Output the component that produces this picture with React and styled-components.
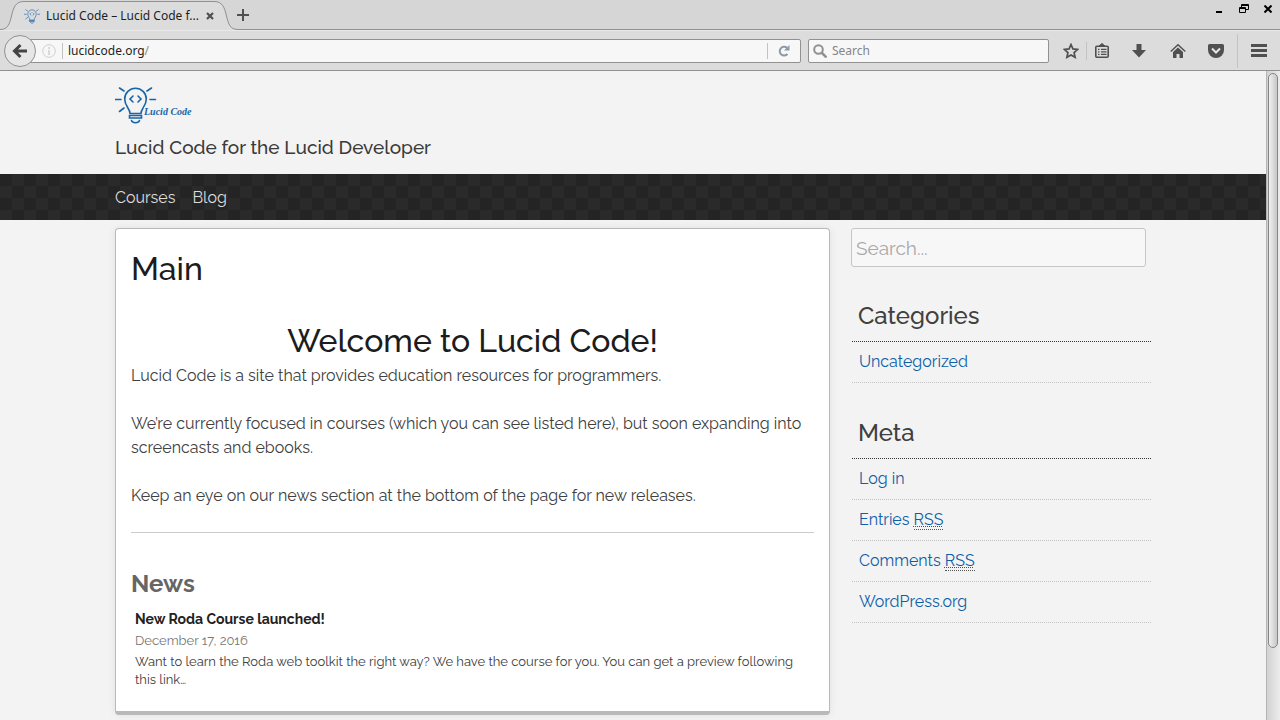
import React from "react";
import styled, { createGlobalStyle } from "styled-components";

const Global = createGlobalStyle`
  * { box-sizing: border-box; }
  body { margin: 0; background: #f3f3f3; overflow: hidden; }
  h1, h2, h3, h4, p, ul { margin: 0; padding: 0; }
  h1, h2, h3, h4 { font-weight: 500; }
  ul { list-style: none; }
  a { color: inherit; text-decoration: none; }
  button { border: 0; padding: 0; background: none; color: inherit; font: inherit; }
  input { font: inherit; color: inherit; border: 0; padding: 0; margin: 0; outline: none; background: none; min-width: 0; }
  svg { display: block; flex: none; }
`;

const Window = styled.div`
  display: flex;
  flex-direction: column;
  height: 100vh;
  font: 12px/18px "Noto Sans", sans-serif;
  color: #1e1e1e;
`;

const TabStrip = styled.header`
  display: flex;
  height: 30px;
  background: linear-gradient(transparent 29px, #919191 29px), #d6d6d6;
`;

const Tab = styled.div`
  display: flex;
  width: 238px;
  height: 30px;
`;

const TabBody = styled.div`
  display: flex;
  flex: 1;
  align-items: center;
  min-width: 0;
  margin-top: 1px;
  border-top: 1px solid #919191;
  background: #dcdcdc;
`;

const TabTitle = styled.span`
  flex: 1;
  margin-left: 6px;
  white-space: nowrap;
`;

const IconButton = styled.button`
  display: flex;
  align-items: center;
  justify-content: center;
  flex: none;
  width: ${(p) => p.$w || 24}px;
  height: ${(p) => p.$h || 24}px;
  color: #505050;
`;

const WindowControls = styled.div`
  display: flex;
  margin-left: auto;
`;

const Toolbar = styled.div`
  display: flex;
  align-items: center;
  height: 41px;
  padding: 0 9px 0 4px;
  background: #dcdcdc;
  border-top: 1px solid #e8e8e8;
  border-bottom: 1px solid #919191;
`;

const BackButton = styled.button`
  display: flex;
  align-items: center;
  justify-content: center;
  flex: none;
  z-index: 1;
  width: 32px;
  height: 32px;
  border: 1px solid #919191;
  border-radius: 50%;
  background: #e6e6e6;
`;

const Field = styled.div`
  display: flex;
  align-items: center;
  height: 24px;
  border: 1px solid #919191;
  border-radius: 2px;
  background: #f7f7f7;
`;

const AddressField = styled(Field)`
  flex: 1;
  margin-left: -8px;
  padding: 0 4px 0 13px;
`;

const AddressInput = styled.input`
  field-sizing: content;
`;

const Path = styled.span`
  flex: 1;
  color: #8a8a8a;
`;

const SearchField = styled(Field)`
  width: 241px;
  margin: 0 10px 0 7px;
  padding-left: 4px;
  input { flex: 1; margin-left: 5px; }
  input::placeholder { color: #858585; opacity: 1; }
`;

const Rule = styled.span`
  flex: none;
  width: 1px;
  height: ${(p) => p.$h}px;
  margin: 0 ${(p) => p.$right || 0}px 0 ${(p) => p.$left || 0}px;
  background: #c3c3c3;
`;

const Viewport = styled.div`
  display: flex;
  flex: 1;
  min-height: 0;
`;

const Page = styled.div`
  flex: 1;
  overflow: hidden;
  background: #f3f3f3;
  color: #404040;
  font: 16px/24px Raleway, Lato, sans-serif;
`;

const Container = styled.div`
  width: calc(100% - 32px);
  max-width: 1036px;
  margin: 0 auto;
`;

const Brand = styled(Container)`
  padding: 14px 0;
`;

const Tagline = styled.h2`
  margin-top: 10px;
  font-size: 19px;
  line-height: 26px;
  color: #3a3a3a;
`;

const NavBar = styled.nav`
  background: repeating-conic-gradient(#2a2a2a 0 25%, #242424 0 50%) 0 0 / 24px 24px;
`;

const NavLinks = styled(Container)`
  display: flex;
  gap: 17px;
  padding: 12px 0 10px;
  color: #dcdcdc;
`;

const Columns = styled(Container)`
  display: flex;
  align-items: flex-start;
  gap: 21px;
  padding: 8px 0;
`;

const Card = styled.main`
  flex: 1;
  min-width: 0;
  padding: 20px 15px 22px;
  border: 1px solid #b9b9b9;
  border-bottom-width: 4px;
  border-radius: 4px;
  background: #fff;
  box-shadow: 0 0 8px rgba(0, 0, 0, 0.08);
`;

const Title = styled.h1`
  font-size: 32px;
  line-height: 40px;
  color: #1c1c1c;
`;

const Welcome = styled(Title).attrs({ as: "h2" })`
  margin: 32px 0 3px;
  text-align: center;
`;

const Paragraph = styled.p`
  margin-bottom: 24px;
`;

const Divider = styled.hr`
  height: 1px;
  margin: 0 0 35px;
  border: 0;
  background: #ccc;
`;

const NewsHeading = styled.h3`
  font-size: 24px;
  line-height: 32px;
  font-weight: 700;
  color: #666;
`;

const NewsItem = styled.article`
  padding: 9px 4px 0;
  font-size: 13px;
  line-height: 18px;
  h4 { margin-bottom: 1px; font-size: 14px; line-height: 20px; font-weight: 700; color: #222; }
  time { display: block; margin-bottom: 2px; line-height: 21px; color: #777; }
`;

const Sidebar = styled.aside`
  width: 300px;
`;

const SiteSearch = styled.input`
  display: block;
  width: 295px;
  height: 39px;
  margin-bottom: 31px;
  padding: 0 4px;
  border: 1px solid #c6c6c6;
  border-radius: 3px;
  background: #f7f7f7;
  font-size: 19px;
  &::placeholder { color: #a9a9a9; opacity: 1; }
`;

const Widget = styled.section`
  margin: 0 0 32px 1px;
  h3 {
    padding: 0 6px 7px;
    border-bottom: 1px dotted #333;
    font-size: 24px;
    line-height: 36px;
  }
  li {
    padding: 8px 7px;
    border-bottom: 1px dotted #c3c3c3;
    color: #0e5ea8;
  }
  abbr {
    display: inline-block;
    line-height: 18px;
    border-bottom: 1px dotted #555;
    text-decoration: underline dotted 1px;
  }
`;

const ScrollTrack = styled.div`
  width: 14px;
  padding: 2px 2px 0 1px;
  border-left: 1px solid #b4b4b4;
  background: linear-gradient(90deg, #d2d2d2, #ececec);
`;

const ScrollThumb = styled.div`
  width: 10px;
  height: calc(100% - 72px);
  border: 1px solid #868686;
  border-radius: 5px;
  background: linear-gradient(90deg, #f0f0f0, #c6c6c6);
`;

const Bulb = () => (
  <g fill="none" stroke="#1865a8" strokeWidth="1.6" strokeLinecap="round">
    <path d="M15 28.500c0-5-5.300-7-5.300-14.500a10.800 10.800 0 0 1 21.600 0c0 7.500-5.300 9.500-5.300 14.500z" />
    <path d="M14.500 30.500h12v2.500h-12zM16.500 35.500c1 3 7 3 8 0" />
    <path d="M18 11l-3 3 3 3M23 11l3 3-3 3" />
    <path d="M.5 14.500h5.500M4.500 3l4.500 3M4.500 26.500l4.500-3.500M35 14.500h5.500M32 6l4.500-3" />
  </g>
);

const Logo = () => (
  <svg width="80" height="39" viewBox="0 0 80 39" role="img" aria-label="Lucid Code">
    <Bulb />
    <text x="29" y="30" fill="#1865a8" stroke="#f3f3f3" strokeWidth="2" paintOrder="stroke" fontFamily="Liberation Serif, serif" fontSize="10" fontStyle="italic" fontWeight="700">Lucid Code</text>
  </svg>
);

const TabCurve = ({ right }) => (
  <svg width="24" height="30" viewBox="0 0 24 30" aria-hidden="true">
    <g transform={right ? "translate(24 0) scale(-1 1)" : undefined}>
      <path d="M0 29.500C8 29.500 9.500 24 11.500 16C13.500 8 15 1.500 24 1.500V30H0z" fill="#dcdcdc" />
      <path d="M0 29.500C8 29.500 9.500 24 11.500 16C13.500 8 15 1.500 24 1.500" fill="none" stroke="#8b9196" />
    </g>
  </svg>
);

const Glyph = ({ children, size = 18 }) => (
  <svg width={size} height={size} viewBox={`0 0 ${size} ${size}`} fill="none" stroke="currentColor" strokeWidth="2" aria-hidden="true">
    {children}
  </svg>
);

export default function App() {
  return (
    <Window>
      <Global />
      <TabStrip>
        <Tab>
          <TabCurve />
          <TabBody>
            <svg width="16" height="16" viewBox="0 -1 41 40" aria-hidden="true"><Bulb /></svg>
            <TabTitle>Lucid Code – Lucid Code f...</TabTitle>
            <IconButton $w={8} $h={20} aria-label="Close tab">
              <Glyph size={8}><path d="M1 1l6 6M7 1l-6 6" strokeWidth="2.200" /></Glyph>
            </IconButton>
          </TabBody>
          <TabCurve right />
        </Tab>
        <IconButton $w={10} $h={30} aria-label="New tab">
          <Glyph size={12}><path d="M6 0v12M0 6h12" /></Glyph>
        </IconButton>
        <WindowControls>
          <IconButton $w={24} $h={18} aria-label="Minimize">
            <svg width="10" height="10" viewBox="0 0 10 10"><path d="M2 7h6v2H2z" fill="#000" /></svg>
          </IconButton>
          <IconButton $w={25} $h={18} aria-label="Restore">
            <svg width="10" height="10" viewBox="0 0 10 10" fill="none" stroke="#000"><path d="M2.500 3V.5h7v5H7M2 1.500h8M.5 3.500h6v5h-6zM0 4.500h7" /></svg>
          </IconButton>
          <IconButton $w={24} $h={18} aria-label="Close">
            <svg width="8" height="8" viewBox="0 0 8 8" stroke="#000" strokeWidth="2"><path d="M.5.5l7 7M7.500.5l-7 7" /></svg>
          </IconButton>
        </WindowControls>
      </TabStrip>

      <Toolbar>
        <BackButton aria-label="Back">
          <svg width="16" height="16" viewBox="0 0 16 16" fill="none" stroke="#444" strokeWidth="3"><path d="M8.500 2L2.500 8l6 6M3 8h12" /></svg>
        </BackButton>
        <AddressField>
          <svg width="14" height="14" viewBox="0 0 14 14" fill="none" stroke="#cfcfcf"><circle cx="7" cy="7" r="6.300" /><path d="M7 6v5M7 3v2" strokeWidth="1.500" /></svg>
          <Rule $h={16} $left={6} $right={5} />
          <AddressInput aria-label="Address" defaultValue="lucidcode.org" />
          <Path>/</Path>
          <Rule $h={16} $right={4} />
          <IconButton aria-label="Reload">
            <svg width="12" height="12" viewBox="0 0 12 12" fill="none" stroke="#8d99a6" strokeWidth="2"><path d="M9.500 9A4.400 4.400 0 1 1 9 2.800" /><path d="M11.500 0v5.500H6z" fill="#8d99a6" stroke="none" /></svg>
          </IconButton>
        </AddressField>
        <SearchField>
          <svg width="14" height="14" viewBox="0 0 14 14" fill="none" stroke="#919191" strokeWidth="2"><circle cx="5.500" cy="5.500" r="4.300" /><path d="M8.500 8.500l5 5" strokeWidth="2.500" /></svg>
          <input aria-label="Search the web" placeholder="Search" />
        </SearchField>
        <IconButton aria-label="Bookmark">
          <Glyph size={16}><path d="M8 1.500l1.900 4.400 4.700.5-3.500 3.200 1 4.700L8 11.900l-4.100 2.400 1-4.700L1.400 6.400l4.700-.5z" strokeWidth="1.700" /></Glyph>
        </IconButton>
        <Rule $h={18} $left={3} />
        <IconButton $w={30} aria-label="Bookmarks list">
          <Glyph size={16}>
            <rect x="1.800" y="3.300" width="12.400" height="11" rx="1" strokeWidth="1.600" />
            <path d="M4.500 3.500L8 .5l3.500 3z" fill="currentColor" strokeWidth="1" />
            <path d="M4 6.300h1.500M7 6.300h5.500M4 8.800h1.500M7 8.800h5.500M4 11.300h1.500M7 11.300h5.500" strokeWidth="1.300" />
          </Glyph>
        </IconButton>
        <IconButton $w={44} aria-label="Downloads">
          <Glyph size={16}><path d="M5.500 1h5v6H15l-7 7.500L1 7h4.500z" fill="currentColor" stroke="none" /></Glyph>
        </IconButton>
        <IconButton $w={34} aria-label="Home">
          <Glyph size={16}><path d="M.7 8.500L8 1.700l7.300 6.800" strokeWidth="1.400" /><path d="M3 9l5-4.600L13 9v6H9.500v-4h-3v4H3z" fill="currentColor" stroke="none" /></Glyph>
        </IconButton>
        <IconButton $w={42} aria-label="Pocket">
          <Glyph size={16}><path d="M1.500 1h13q1.500 0 1.500 1.500V7a8 8 0 0 1-16 0V2.500Q0 1 1.500 1z" fill="currentColor" stroke="none" /><path d="M4 5.500l4 4 4-4" stroke="#e6e6e6" /></Glyph>
        </IconButton>
        <Rule $h={34} $right={9} />
        <IconButton aria-label="Menu">
          <Glyph size={16}><path d="M0 2.500h16M0 7.500h16M0 12.500h16" strokeWidth="3" /></Glyph>
        </IconButton>
      </Toolbar>

      <Viewport>
        <Page>
          <Brand as="header">
            <a href="#home"><Logo /></a>
            <Tagline>Lucid Code for the Lucid Developer</Tagline>
          </Brand>
          <NavBar>
            <NavLinks>
              <a href="#courses">Courses</a>
              <a href="#blog">Blog</a>
            </NavLinks>
          </NavBar>
          <Columns>
            <Card>
              <Title>Main</Title>
              <Welcome>Welcome to Lucid Code!</Welcome>
              <Paragraph>Lucid Code is a site that provides education resources for programmers.</Paragraph>
              <Paragraph>We’re currently focused in courses (which you can see listed here), but soon expanding into screencasts and ebooks.</Paragraph>
              <Paragraph>Keep an eye on our news section at the bottom of the page for new releases.</Paragraph>
              <Divider />
              <NewsHeading>News</NewsHeading>
              <NewsItem>
                <h4>New Roda Course launched!</h4>
                <time dateTime="2016-12-17">December 17, 2016</time>
                <p>Want to learn the Roda web toolkit the right way? We have the course for you. You can get a preview following this link…</p>
              </NewsItem>
            </Card>
            <Sidebar>
              <SiteSearch type="search" aria-label="Search the site" placeholder="Search..." />
              <Widget>
                <h3>Categories</h3>
                <ul><li><a href="#uncategorized">Uncategorized</a></li></ul>
              </Widget>
              <Widget>
                <h3>Meta</h3>
                <ul>
                  <li><a href="#login">Log in</a></li>
                  <li><a href="#entries">Entries <abbr>RSS</abbr></a></li>
                  <li><a href="#comments">Comments <abbr>RSS</abbr></a></li>
                  <li><a href="#wordpress">WordPress.org</a></li>
                </ul>
              </Widget>
            </Sidebar>
          </Columns>
        </Page>
        <ScrollTrack><ScrollThumb /></ScrollTrack>
      </Viewport>
    </Window>
  );
}
